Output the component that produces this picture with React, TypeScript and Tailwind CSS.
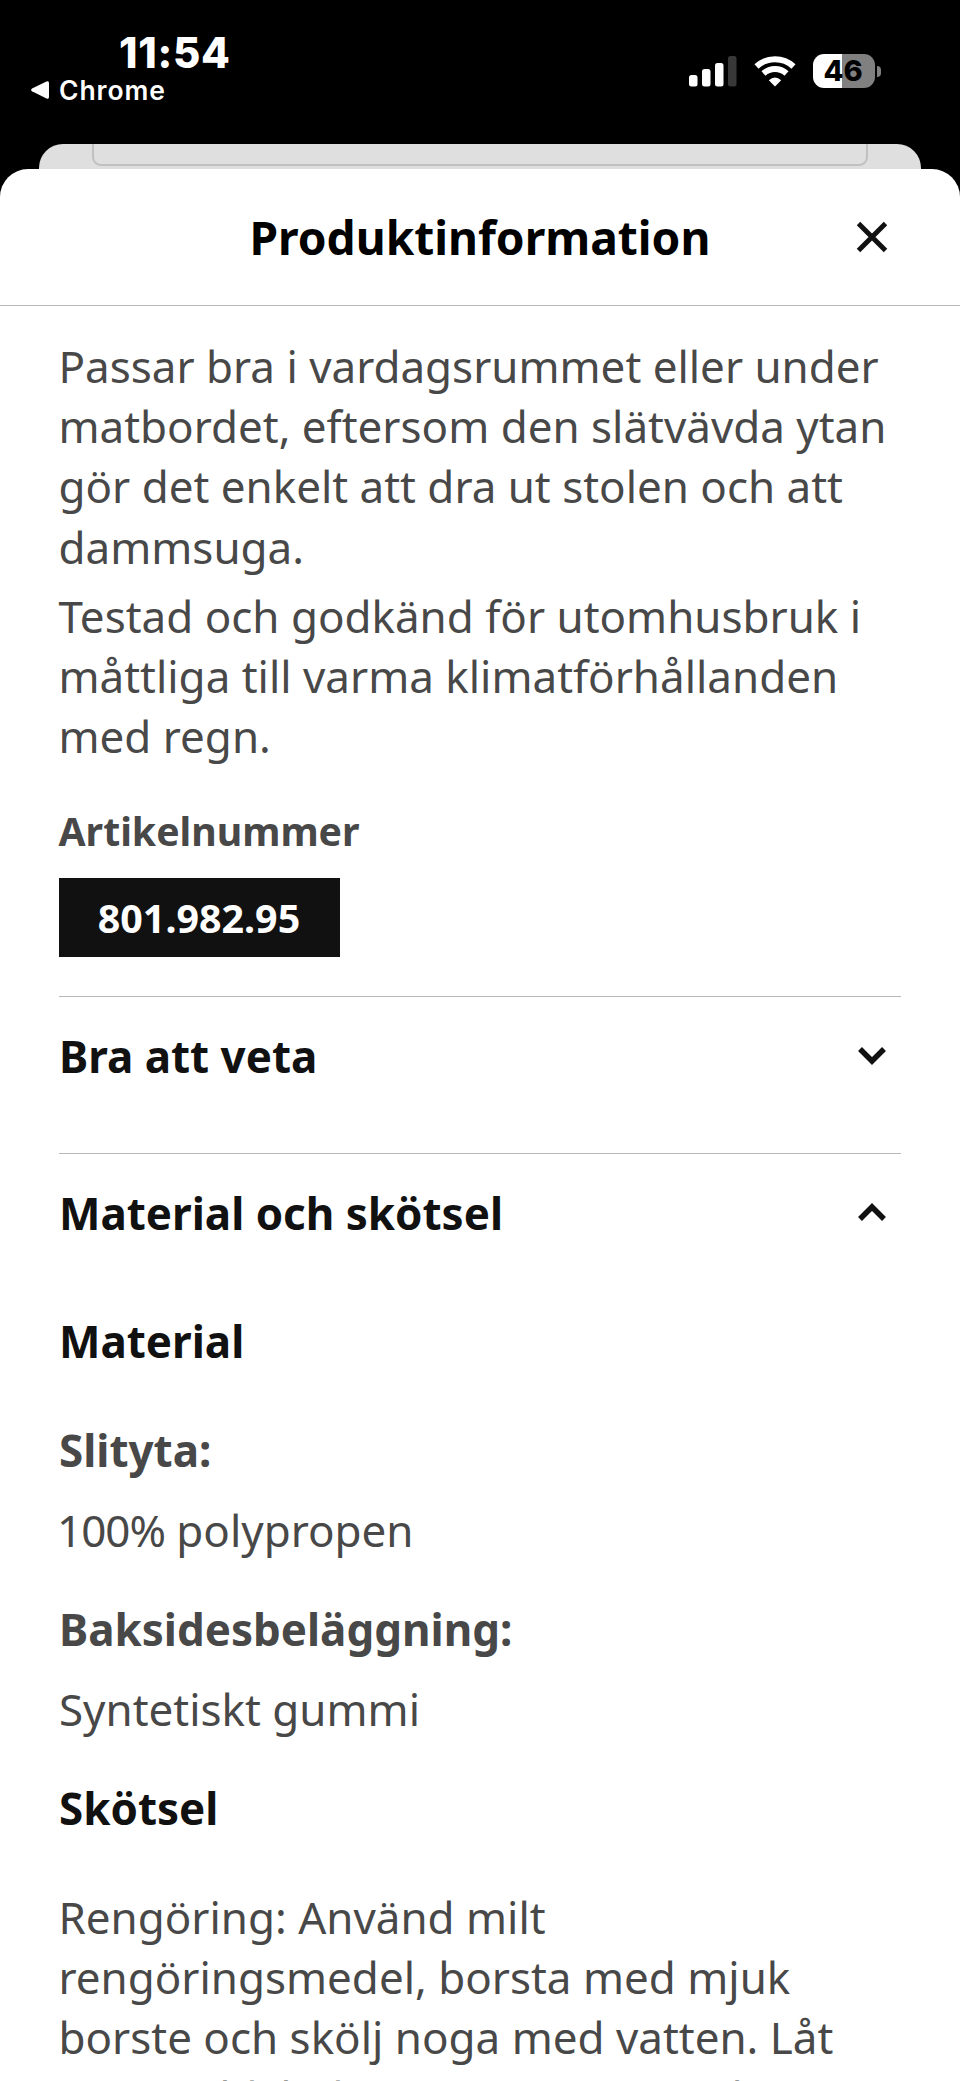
import type { ReactNode } from "react";

function StatusBar() {
  return (
    <div className="flex h-36 justify-between font-['Inter'] text-white">
      <div className="ml-[31px] flex flex-col">
        <span className="mt-[28px] ml-[88px] h-[48px] text-[42px] leading-[50px] font-extrabold tracking-[0.7px]">
          11:54
        </span>
        <div className="flex h-[28px] items-center">
          <svg width="18" height="18" viewBox="0 0 18 18" fill="currentColor">
            <path d="M1 7.6 15.5.4Q18-.5 18 2v14q0 2.400-2.500 1.400L1 10.300Q-.7 9 1 7.600Z" />
          </svg>
          <span className="ml-[10px] text-[26.500px] leading-7 font-semibold tracking-[0.900px]">Chrome</span>
        </div>
      </div>
      <div className="mt-[54px] mr-[79px] flex h-[34px] items-center">
        <svg width="48" height="32" viewBox="0 0 48 32" fill="currentColor">
          <rect x="0" y="20" width="8.500" height="11.500" rx="2.500" />
          <rect x="13" y="14" width="8.500" height="17.500" rx="2.500" />
          <rect x="26" y="8" width="8.500" height="23.500" rx="2.500" />
          <rect x="39" y="1" width="8.500" height="30.500" rx="2.500" opacity=".22" />
        </svg>
        <svg className="ml-[17px]" width="42" height="32" viewBox="0 0 42 32" fill="none" stroke="currentColor" strokeWidth="6">
          <path d="M2.500 11.500C12.800 1.800 29.200 1.800 39.500 11.500" />
          <path d="M9.500 18.500C16 12.500 26 12.500 32.500 18.500" />
          <path d="M21 31.500 14.800 25.200Q21 20 27.200 25.200Z" fill="currentColor" stroke="none" />
        </svg>
        <div className="ml-[17px] flex h-[34px] w-[62px] items-center justify-center rounded-[11px] bg-linear-to-r from-white from-47% to-[#808080] to-47% pr-[2px] text-[29px] font-extrabold text-black">
          46
        </div>
        <div className="ml-[2px] h-[11px] w-[4px] rounded-r-full bg-[#808080]" />
      </div>
    </div>
  );
}

function SheetHeader() {
  return (
    <header className="flex h-[137px] items-center border-b border-[#b8b8b8]">
      <h1 className="mt-[2px] ml-[249.500px] text-[46.100px] leading-[64px] font-bold text-black">Produktinformation</h1>
      <button className="mr-[72px] ml-auto text-[#111]" aria-label="Stäng">
        <svg width="32" height="32" viewBox="0 0 32 32" stroke="currentColor" strokeWidth="4.900">
          <path d="M2.500 2.500 29.500 29.500M29.500 2.500 2.500 29.500" />
        </svg>
      </button>
    </header>
  );
}

function SectionToggle({ title, open = false }: { title: string; open?: boolean }) {
  return (
    <button className="flex h-[157px] w-full items-start justify-between border-t border-[#b8b8b8] pt-[29px] text-[#111]">
      <span className="leading-[60px] font-bold">{title}</span>
      <svg className="mt-[20px] mr-[14px]" width="30" height="20" viewBox="0 0 30 20" fill="none" stroke="currentColor" strokeWidth="5.500">
        <path d={open ? "M3 16 15 4 27 16" : "M3 3 15 15 27 3"} />
      </svg>
    </button>
  );
}

function MaterialPart({ name, children }: { name: string; children: ReactNode }) {
  return (
    <div className="mb-[39px]">
      <dt className="mb-[19.800px] font-bold">{name}</dt>
      <dd>{children}</dd>
    </div>
  );
}

export default function App() {
  return (
    <div className="flex h-[2081px] flex-col overflow-hidden bg-black font-['Noto_Sans',sans-serif]">
      <StatusBar />
      <div className="mx-[39px] h-[25px] shrink-0 rounded-t-[24px] bg-[#dfdfdf] px-[53px]">
        <div className="h-[22px] rounded-b-[9px] border-2 border-t-0 border-[#c0c0c0]" />
      </div>

      <main className="min-h-0 flex-1 overflow-hidden rounded-t-[28px] bg-white">
        <SheetHeader />
        <div className="px-[59px] pt-[30px] text-[43.950px] leading-[60.200px] text-[#484848]">
          <p className="-ml-[0.500px] whitespace-nowrap">
            Passar bra i vardagsrummet eller under
            <br />
            matbordet, eftersom den slätvävda ytan
            <br />
            gör det enkelt att dra ut stolen och att
            <br />
            dammsuga.
          </p>
          <p className="mt-[9px] -ml-[0.500px] whitespace-nowrap">
            Testad och godkänd för utomhusbruk i
            <br />
            måttliga till varma klimatförhållanden
            <br />
            med regn.
          </p>

          <div className="mt-[38px] mb-[39px] text-[39.200px] leading-[54px] font-bold">
            <h2 className="-ml-[0.500px]">Artikelnummer</h2>
            <span className="mt-[19.600px] flex h-[79px] w-[281px] items-center justify-center bg-[#111] pr-[1px] text-[39.400px] text-white">
              801.982.95
            </span>
          </div>

          <SectionToggle title="Bra att veta" />
          <SectionToggle title="Material och skötsel" open />

          <h3 className="mt-[1px] mb-[48.400px] font-bold text-[#111]">Material</h3>
          <dl>
            <MaterialPart name="Slityta:">
              <span className="-ml-[2px] tracking-[-1px]">100%</span> polypropen
            </MaterialPart>
            <MaterialPart name="Baksidesbeläggning:">Syntetiskt gummi</MaterialPart>
          </dl>

          <h3 className="mb-[48.400px] font-bold text-[#111]">Skötsel</h3>
          <p className="-ml-[0.500px] whitespace-nowrap">
            Rengöring: Använd milt
            <br />
            rengöringsmedel, borsta med mjuk
            <br />
            borste och skölj noga med vatten. Låt
            <br />
            mattan bli helt torr innan användning.
          </p>
        </div>
      </main>
    </div>
  );
}
